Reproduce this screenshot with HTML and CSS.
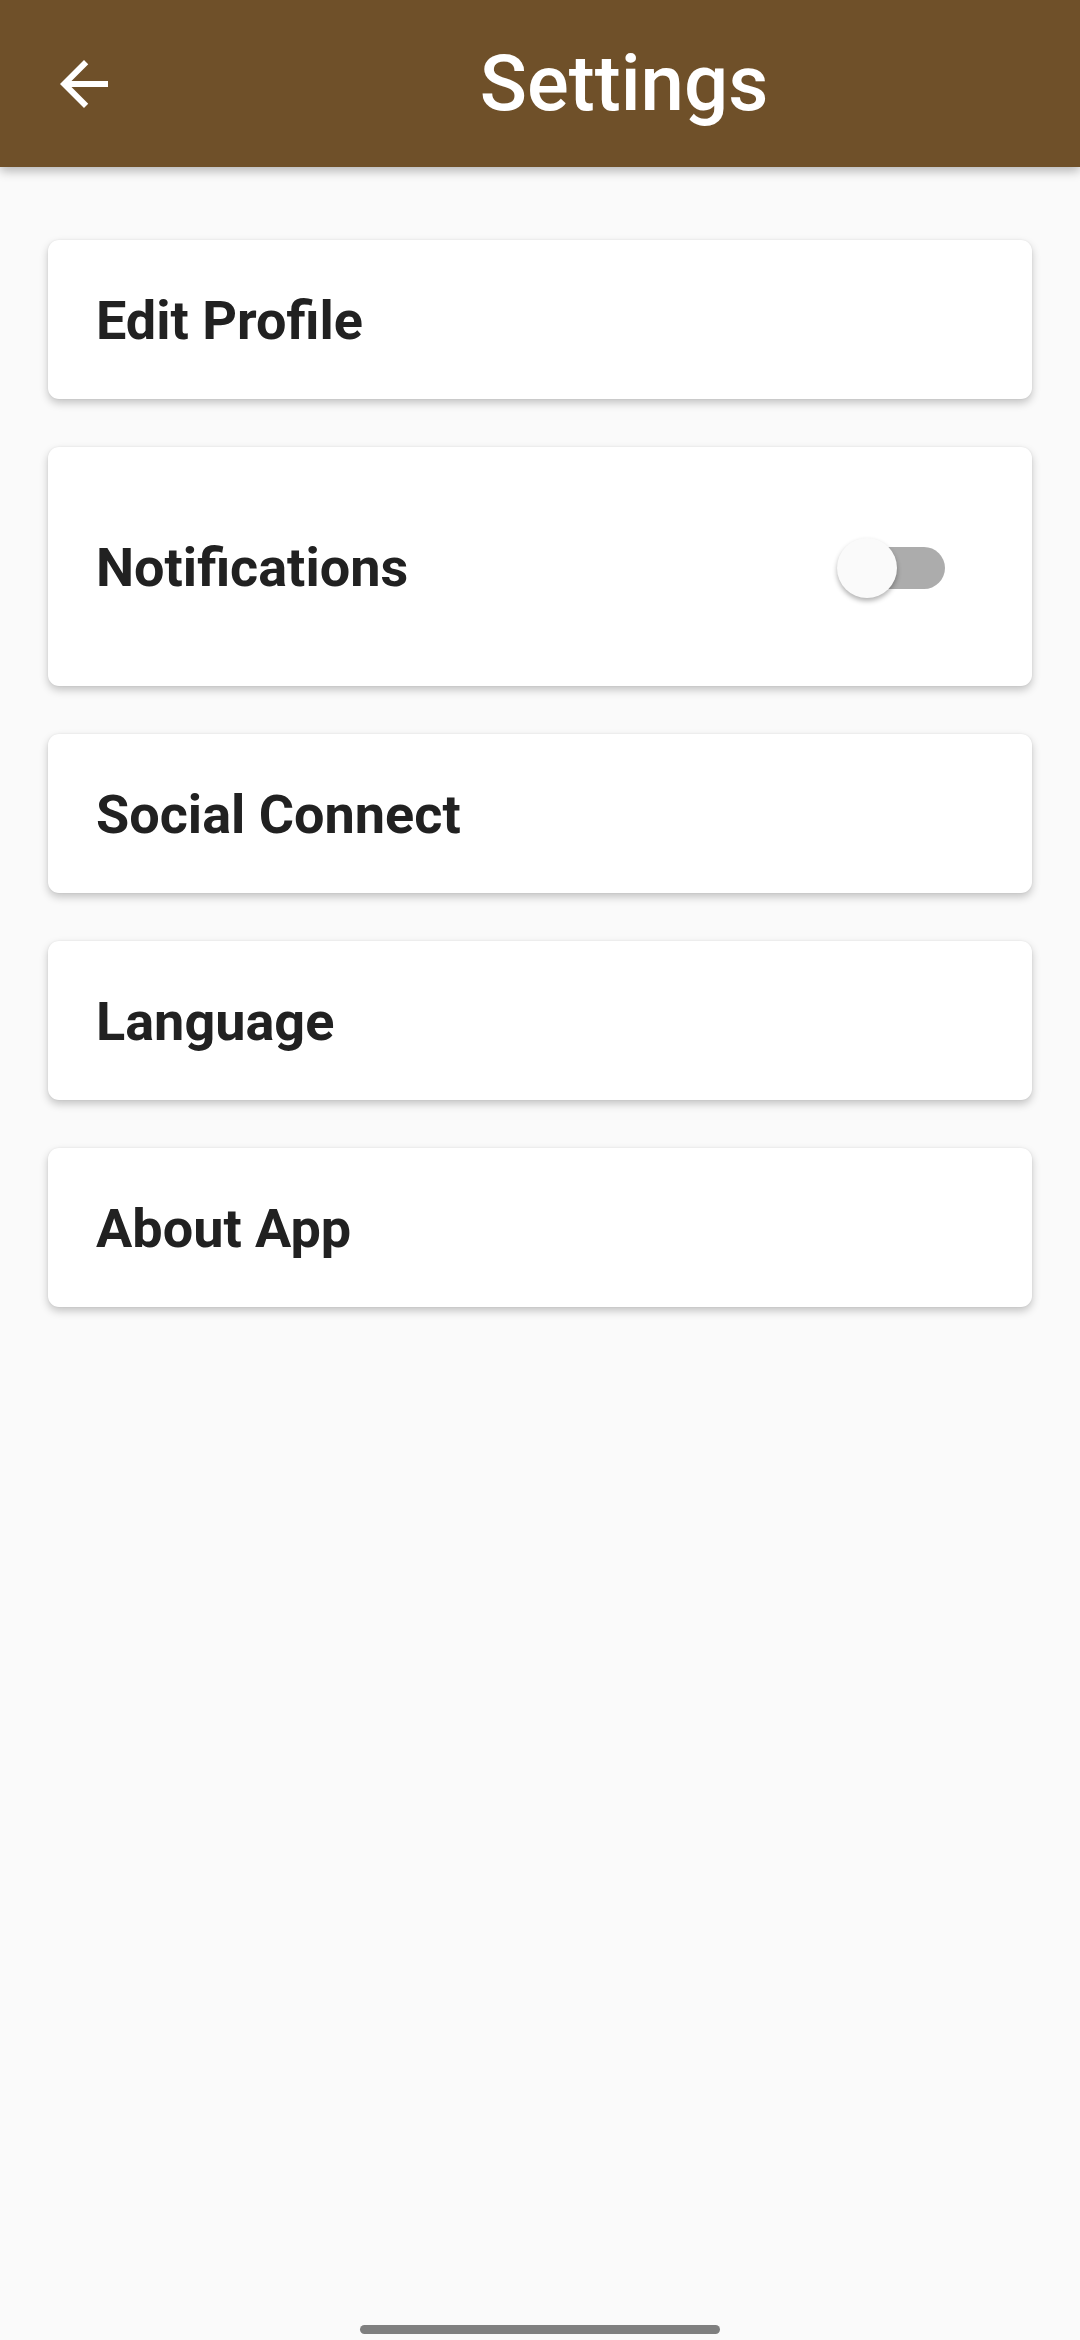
FILE: index.html
```html
<!DOCTYPE html>
<html lang="en">
<head>
<meta charset="utf-8">
<title>Settings</title>
<link rel="stylesheet" href="styles.css">
</head>
<body>
<div class="screen">
  <header class="appbar">
    <button class="back" aria-label="Back">
      <svg viewBox="0 0 24 24" width="72" height="72"><path fill="#ffffff" d="M20 11H7.83l5.59-5.59L12 4l-8 8 8 8 1.41-1.41L7.83 13H20v-2z"/></svg>
    </button>
    <h1 class="title">Settings</h1>
  </header>
  <main class="list">
    <div class="card"><span class="label">Edit Profile</span></div>
    <div class="card card-tall">
      <span class="label">Notifications</span>
      <div class="switch"><div class="track"></div><div class="thumb"></div></div>
    </div>
    <div class="card"><span class="label">Social Connect</span></div>
    <div class="card"><span class="label">Language</span></div>
    <div class="card"><span class="label">About App</span></div>
  </main>
  <div class="navbar"><div class="pill"></div></div>
</div>
</body>
</html>
```
FILE: styles.css
```css
html, body {
  margin: 0;
  padding: 0;
  background: #fafafa;
}
.screen {
  width: 1080px;
  height: 2340px;
  display: flex;
  flex-direction: column;
  background: #fafafa;
  font-family: Roboto, "Liberation Sans", sans-serif;
  overflow: hidden;
}
.appbar {
  height: 167px;
  flex: none;
  background: #6f5029;
  display: flex;
  align-items: center;
  box-shadow: 0 4px 10px rgba(0, 0, 0, 0.28);
  position: relative;
  z-index: 1;
}
.back {
  width: 72px;
  height: 72px;
  margin-left: 48px;
  padding: 0;
  border: 0;
  background: none;
  display: flex;
}
.title {
  flex: 1;
  margin: 0;
  padding-left: 48px;
  text-align: center;
  color: #ffffff;
  font-weight: 500;
  font-size: 78px;
  line-height: 1;
}
.list {
  flex: 1;
  display: flex;
  flex-direction: column;
  gap: 48px;
  padding: 73px 48px 0;
}
.card {
  height: 159px;
  box-sizing: border-box;
  background: #ffffff;
  border-radius: 11px;
  box-shadow: 0 4px 8px rgba(0, 0, 0, 0.22), 0 0 2px rgba(0, 0, 0, 0.08);
  display: flex;
  align-items: center;
  justify-content: space-between;
  padding: 2px 87px 0 48px;
}
.card-tall {
  height: 239px;
}
.label {
  color: #212121;
  font-weight: 700;
  font-size: 54px;
  line-height: 1;
}
.switch {
  position: relative;
  width: 102px;
  height: 60px;
}
.track {
  position: absolute;
  left: 0;
  right: 0;
  top: 9px;
  height: 42px;
  border-radius: 21px;
  background: #acacac;
}
.thumb {
  position: absolute;
  left: -6px;
  top: 0;
  width: 60px;
  height: 60px;
  border-radius: 50%;
  background: #fafafa;
  box-shadow: 0 3px 5px rgba(0, 0, 0, 0.3);
}
.navbar {
  height: 40px;
  flex: none;
  display: flex;
  justify-content: center;
  align-items: flex-start;
}
.pill {
  margin-top: 25px;
  width: 360px;
  height: 9px;
  border-radius: 5px;
  background: #7f7f7f;
}
```
